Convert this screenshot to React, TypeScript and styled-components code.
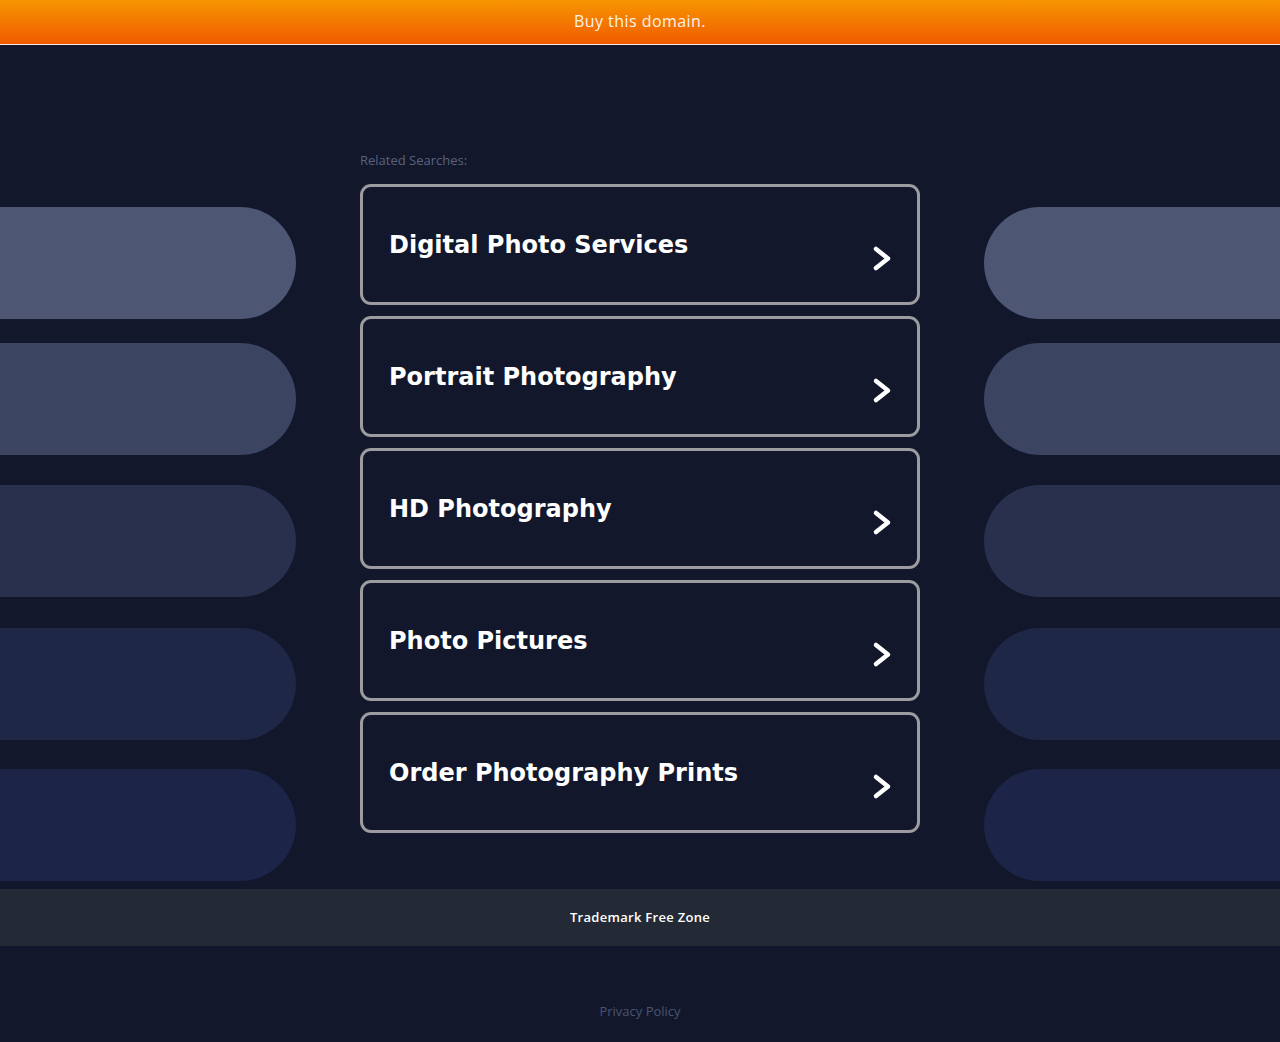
import * as React from 'react';
import styled, { createGlobalStyle } from 'styled-components';

const GlobalStyle = createGlobalStyle`
  html, body {
    margin: 0;
    padding: 0;
    background: #12172b;
  }
  * {
    box-sizing: border-box;
  }
`;

const searches = [
  'Digital Photo Services',
  'Portrait Photography',
  'HD Photography',
  'Photo Pictures',
  'Order Photography Prints'
];

// decorative side pills, top gap and fill for each row
const pills = [
  {gap: 0, color: '#4d5773'},
  {gap: 24, color: '#3b4461'},
  {gap: 30, color: '#28304e'},
  {gap: 31, color: '#1e2746'},
  {gap: 29, color: '#1c2547'}
];

const Page = styled.div`
  min-height: 1042px;
  background: #12172b;
  display: flex;
  flex-direction: column;
`;

const TopBar = styled.a`
  display: flex;
  align-items: center;
  justify-content: center;
  height: 45px;
  background: linear-gradient(#f79500, #f05b00);
  border-bottom: 1px solid #f3ece6;
  color: #fdf3e8;
  font-family: "Open Sans", "Liberation Sans", sans-serif;
  font-size: 16px;
  letter-spacing: 0.45px;
  text-decoration: none;
  padding-bottom: 2px;
`;

const Main = styled.div`
  display: grid;
  grid-template-columns: 296px 560px 296px;
  column-gap: 64px;
`;

const Side = styled.div`
  display: flex;
  flex-direction: column;
  padding-top: 162px;
  padding-bottom: 8px;
`;

const Pill = styled.div<{ $gap: number; $color: string; $side: 'left' | 'right' }>`
  height: 112px;
  margin-top: ${p => p.$gap}px;
  background: ${p => p.$color};
  border-radius: ${p => p.$side === 'left' ? '0 56px 56px 0' : '56px 0 0 56px'};
`;

const Center = styled.div`
  display: flex;
  flex-direction: column;
  padding-top: 106px;
`;

const Label = styled.div`
  font-family: "Open Sans", "Liberation Sans", sans-serif;
  font-size: 13px;
  color: #5a627e;
  height: 17px;
  margin-bottom: 16px;
`;

const List = styled.div`
  display: flex;
  flex-direction: column;
  gap: 11px;
`;

const Card = styled.a`
  display: flex;
  align-items: center;
  justify-content: space-between;
  height: 121px;
  border: 3px solid #9c9ca0;
  border-radius: 11px;
  padding: 0 25px 0 26px;
  text-decoration: none;
  background: #12172b;
`;

const Title = styled.span`
  font-family: "DejaVu Sans", sans-serif;
  font-weight: bold;
  font-size: 24px;
  color: #ffffff;
  margin-top: 1px;
`;

const Chevron = styled.svg`
  width: 20px;
  height: 27px;
  margin-top: 27px;
`;

const FooterBand = styled.div`
  height: 57px;
  background: #242a35;
  display: flex;
  align-items: center;
  justify-content: center;
  font-family: "Open Sans", "Liberation Sans", sans-serif;
  font-weight: 600;
  font-size: 13px;
  color: #ffffff;
  letter-spacing: 0.3px;
  padding-bottom: 2px;
`;

const Privacy = styled.a`
  display: block;
  text-align: center;
  margin-top: 56px;
  font-family: "Open Sans", "Liberation Sans", sans-serif;
  font-size: 13px;
  color: #4b536f;
  text-decoration: none;
`;

const Arrow = () => (
  <Chevron viewBox="0 0 20 27">
    <polyline
      points="4,4 16,13.5 4,23"
      fill="none"
      stroke="#ffffff"
      strokeWidth="4.5"
      strokeLinecap="round"
      strokeLinejoin="round"
    />
  </Chevron>
);

export default function App() {
  return (
    <Page>
      <GlobalStyle/>
      <TopBar href="#">Buy this domain.</TopBar>
      <Main>
        <Side>
          {pills.map((p, i) => <Pill key={i} $gap={p.gap} $color={p.color} $side="left"/>)}
        </Side>
        <Center>
          <Label>Related Searches:</Label>
          <List>
            {searches.map(s => (
              <Card key={s} href="#">
                <Title>{s}</Title>
                <Arrow/>
              </Card>
            ))}
          </List>
        </Center>
        <Side>
          {pills.map((p, i) => <Pill key={i} $gap={p.gap} $color={p.color} $side="right"/>)}
        </Side>
      </Main>
      <FooterBand>Trademark Free Zone</FooterBand>
      <Privacy href="#">Privacy Policy</Privacy>
    </Page>
  );
}
